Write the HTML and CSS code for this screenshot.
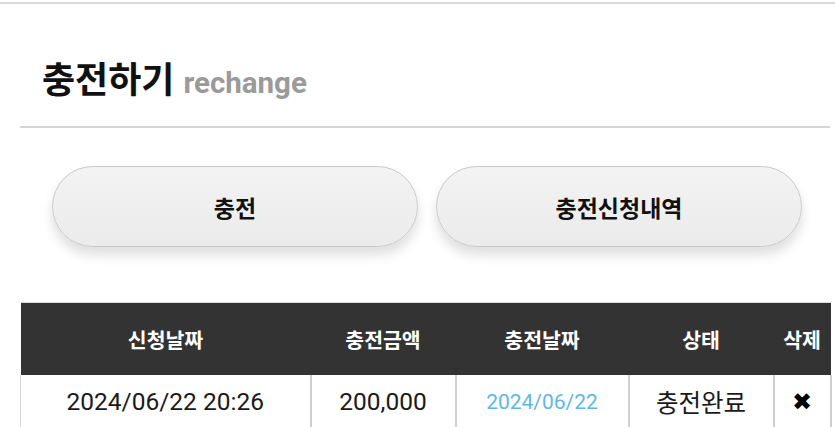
FILE: index.html
```html
<!DOCTYPE html>
<html lang="ko">
<head>
<meta charset="utf-8">
<title>충전하기</title>
<link rel="stylesheet" href="styles.css">
</head>
<body>
<div class="topline"></div>
<div class="page">
  <header class="head">
    <h1 class="title">충전하기 <span class="sub">rechange</span></h1>
  </header>
  <div class="tabs">
    <button class="tab">충전</button>
    <button class="tab">충전신청내역</button>
  </div>
  <table class="list">
    <colgroup>
      <col class="c1"><col class="c2"><col class="c3"><col class="c4"><col class="c5">
    </colgroup>
    <thead>
      <tr><th>신청날짜</th><th>충전금액</th><th>충전날짜</th><th>상태</th><th>삭제</th></tr>
    </thead>
    <tbody>
      <tr>
        <td>2024/06/22 20:26</td>
        <td>200,000</td>
        <td class="blue">2024/06/22</td>
        <td>충전완료</td>
        <td class="del">✖</td>
      </tr>
    </tbody>
  </table>
</div>
</body>
</html>
```

FILE: styles.css
```css
* { box-sizing: border-box; }
html, body { margin: 0; padding: 0; background: #fff; }
body {
  font-family: Roboto, "Noto Sans CJK KR", sans-serif;
  color: #111;
  overflow: hidden;
}
.topline {
  margin-top: 2px;
  border-top: 2px solid #d9d9d9;
}
.page {
  padding: 0 5px 0 20px;
}
.head {
  padding: 57px 0 25px 22px;
  border-bottom: 2px solid #d6d6d6;
}
.title {
  margin: 0;
  height: 40px;
  line-height: 40px;
  font-size: 36px;
  font-weight: 700;
  color: #111;
  white-space: nowrap;
}
.sub {
  font-family: Roboto, sans-serif;
  font-size: 29.5px;
  font-weight: 700;
  color: #9a9a9a;
  margin-left: 0;
}
.tabs {
  display: flex;
  gap: 18px;
  padding-left: 32px;
  margin-top: 38px;
}
.tab {
  width: 366px;
  height: 81px;
  border: 1px solid #c9c9c9;
  border-radius: 41px;
  background: linear-gradient(#f3f3f3, #ebebeb);
  box-shadow: 0 8px 12px rgba(0,0,0,0.13);
  font-family: "Noto Sans CJK KR", Roboto, sans-serif;
  font-size: 23px;
  font-weight: 700;
  color: #111;
  padding: 0;
}
.list {
  margin-top: 55px;
  width: 810px;
  border-collapse: collapse;
  table-layout: fixed;
}
.c1 { width: 290px; }
.c2 { width: 145px; }
.c3 { width: 173px; }
.c4 { width: 145px; }
.c5 { width: 57px; }
.list th {
  background: #333;
  color: #fff;
  height: 72px;
  font-family: "Noto Sans CJK KR", sans-serif;
  font-size: 20.5px;
  font-weight: 700;
  text-align: center;
  padding: 0;
  border-top: 1px solid #ddd;
}
.list td {
  height: 54px;
  text-align: center;
  font-size: 24.5px;
  color: #1a1a1a;
  border-left: 2px solid #cfcfcf;
  padding: 0;
  white-space: nowrap;
}
.list td:first-child { border-left: 1px solid #d8d8d8; }
.list td:last-child { border-right: 2px solid #cfcfcf; }
.blue { color: #5db8ea !important; font-size: 21px !important; }
.del {
  font-family: "DejaVu Sans", sans-serif;
  font-size: 24px !important;
  color: #000 !important;
}
```
